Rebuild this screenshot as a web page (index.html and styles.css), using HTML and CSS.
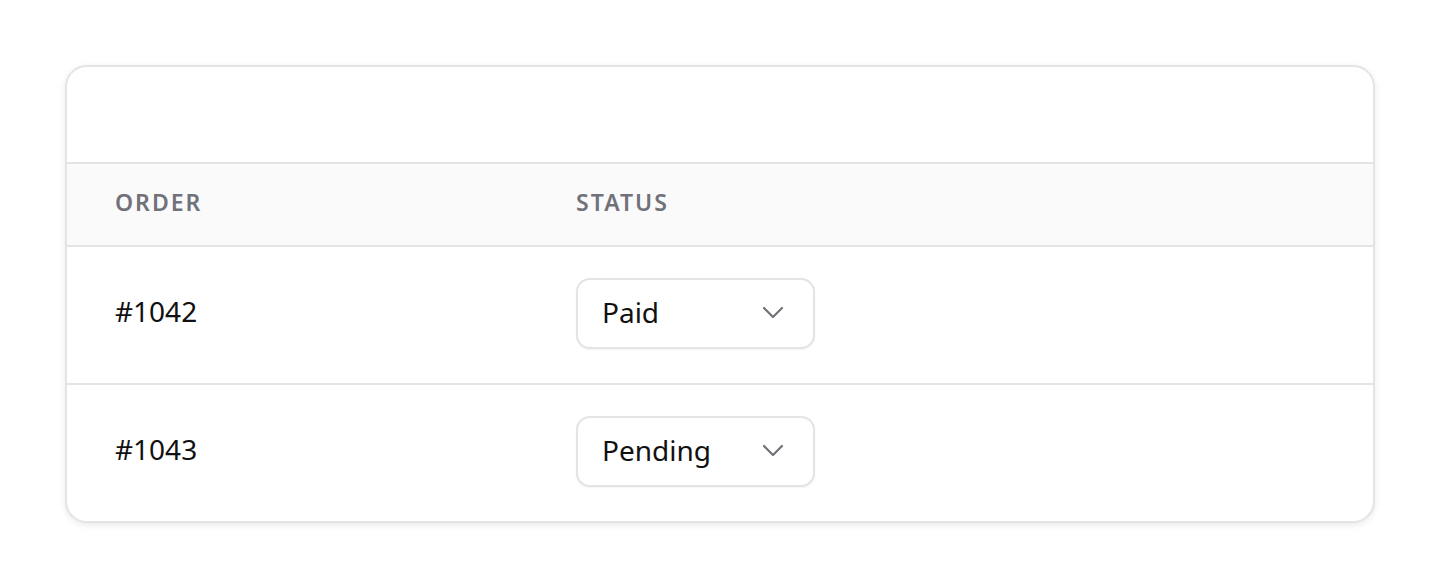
FILE: index.html
```html
<!DOCTYPE html>
<html lang="en">
<head>
  <meta charset="UTF-8">
  <meta name="viewport" content="width=device-width, initial-scale=1.0">
  <title>Orders</title>
  <link rel="stylesheet" href="styles.css">
</head>
<body>

  <div class="card">
    <div class="card-top"></div>

    <table class="orders">
      <thead>
        <tr>
          <th class="col-order">Order</th>
          <th>Status</th>
        </tr>
      </thead>
      <tbody>
        <tr>
          <td class="col-order">#1042</td>
          <td>
            <div class="status-select">
              <span>Paid</span>
              <svg class="chevron" viewBox="0 0 24 24" width="24" height="24"><path d="M3 8l9 9 9-9" fill="none" stroke="currentColor" stroke-width="2.2" stroke-linecap="round" stroke-linejoin="round"/></svg>
            </div>
          </td>
        </tr>
        <tr>
          <td class="col-order">#1043</td>
          <td>
            <div class="status-select">
              <span>Pending</span>
              <svg class="chevron" viewBox="0 0 24 24" width="24" height="24"><path d="M3 8l9 9 9-9" fill="none" stroke="currentColor" stroke-width="2.2" stroke-linecap="round" stroke-linejoin="round"/></svg>
            </div>
          </td>
        </tr>
      </tbody>
    </table>
  </div>

</body>
</html>
```

FILE: styles.css
```css
body {
  margin: 0;
  padding: 65px;
  background-color: #fff;
  font-family: "Noto Sans", "Open Sans", sans-serif;
  color: #111;
}

.card {
  border: 2px solid #e4e4e7;
  border-radius: 22px;
  background-color: #fff;
  box-shadow: 0 2px 7px rgba(0, 0, 0, 0.09);
  overflow: hidden;
}

.card-top {
  height: 95px;
}

.orders {
  width: 100%;
  border-collapse: collapse;
}

.orders th {
  text-align: left;
  height: 76px;
  padding: 0 0 5px 48px;
  background-color: #fafafa;
  border-top: 2px solid #e4e4e7;
  border-bottom: 2px solid #e4e4e7;
  font-size: 23px;
  font-weight: 600;
  letter-spacing: 2px;
  text-transform: uppercase;
  color: #71717a;
}

.orders td {
  height: 132px;
  padding: 0 0 4px 48px;
  font-size: 28px;
  color: #111;
}

.orders td.col-order {
  height: 128px;
  padding-bottom: 8px;
}

.orders tbody tr + tr td {
  border-top: 2px solid #e4e4e7;
}

.col-order {
  width: 413px;
}

.status-select {
  display: flex;
  align-items: center;
  justify-content: space-between;
  box-sizing: border-box;
  width: 239px;
  height: 71px;
  padding: 0 28px 2px 24px;
  border: 2px solid #e4e4e7;
  border-radius: 14px;
  box-shadow: 0 1px 2px rgba(0, 0, 0, 0.05);
  background-color: #fff;
}

.chevron {
  color: #71717a;
}
```
